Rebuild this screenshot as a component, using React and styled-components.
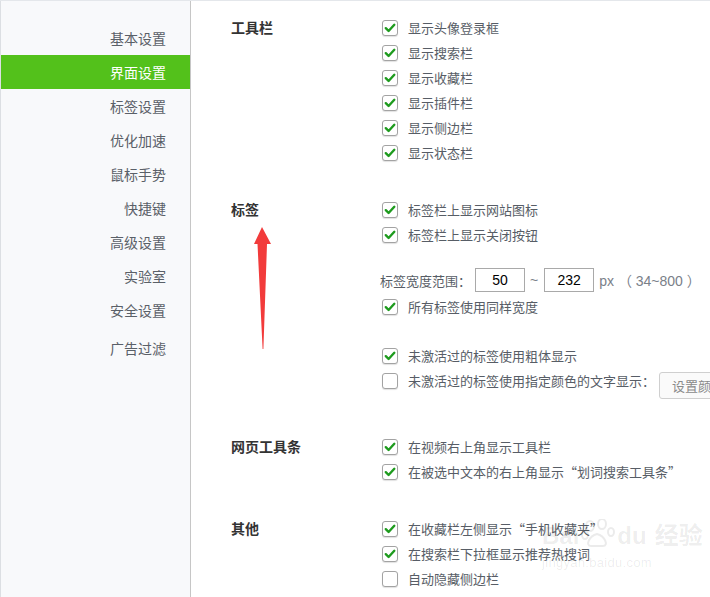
import React from 'react';
import styled, { createGlobalStyle } from 'styled-components';

const Global = createGlobalStyle`
  html, body { margin: 0; padding: 0; background: #fff; }
  body { font-family: "Noto Sans CJK SC", "Liberation Sans", sans-serif; }
`;

const Page = styled.div`
  position: relative;
  display: flex;
  width: 710px;
  height: 597px;
  overflow: hidden;
  border-top: 1px solid #e4e7eb;
  box-sizing: border-box;
`;

const Sidebar = styled.nav`
  flex: none;
  width: 191px;
  box-sizing: border-box;
  background: #f8f9fb;
  border-left: 1px solid #dcdfe3;
  border-right: 1px solid #c6c6c6;
  padding-top: 20px;
  display: flex;
  flex-direction: column;
`;

const NavItem = styled.div`
  height: 34px;
  line-height: 34px;
  text-align: right;
  padding-right: 24px;
  font-size: 14px;
  color: ${p => (p.$active ? '#ffffff' : '#5a6068')};
  background: ${p => (p.$active ? '#53c11b' : 'transparent')};
  margin-top: ${p => p.$gap || 0}px;
`;

const Content = styled.main`
  flex: 1;
  min-width: 0;
  padding: 14px 0 0 40px;
  overflow: hidden;
`;

const Section = styled.section`
  display: grid;
  grid-template-columns: 151px auto;
  margin-bottom: ${p => p.$after || 32}px;
`;

const Title = styled.h3`
  margin: 0;
  height: 25px;
  line-height: 25px;
  font-size: 14px;
  font-weight: bold;
  color: #333;
`;

const Options = styled.div`
  display: flex;
  flex-direction: column;
`;

const Row = styled.div`
  display: flex;
  align-items: center;
  gap: 10px;
  height: 25px;
  font-size: 13px;
  color: #575d66;
  white-space: nowrap;
`;

const Box = styled.span`
  flex: none;
  width: 16px;
  height: 16px;
  box-sizing: border-box;
  border: 1px solid #a3a3a3;
  border-radius: 3px;
  background: #fff;
  box-shadow: 0 1px 1px rgba(0, 0, 0, 0.12);
  display: flex;
  align-items: center;
  justify-content: center;
`;

const Check = ({ on }) => (
  <Box>
    {on && (
      <svg width="12" height="12" viewBox="0 0 12 12">
        <path d="M1.8 6.2 L4.6 9 L10.3 2.8" fill="none" stroke="#1e9b1e" strokeWidth="2.4" strokeLinecap="round" strokeLinejoin="round" />
      </svg>
    )}
  </Box>
);

const Option = ({ on, children, extra }) => (
  <Row>
    <Check on={on} />
    <span>{children}</span>
    {extra}
  </Row>
);

const WidthRow = styled.div`
  display: flex;
  align-items: center;
  height: 24px;
  margin: 21px 0 2px -2px;
  font-size: 13px;
  color: #575d66;
  white-space: nowrap;
`;

const NumInput = styled.input`
  width: 50px;
  height: 24px;
  box-sizing: border-box;
  border: 1px solid #a9a9a9;
  padding: 0;
  margin: ${p => p.$m || '0'};
  text-align: center;
  font-family: "Liberation Sans", Arial, sans-serif;
  font-size: 14px;
  color: #000;
  background: #fff;
  outline: none;
`;

const Muted = styled.span`
  font-family: "Liberation Sans", "Noto Sans CJK SC", sans-serif;
  font-size: 14px;
  color: #7a8089;
  margin: ${p => p.$m || '0'};
`;

const Spacer = styled.div`
  height: ${p => p.$h}px;
`;

const ColorButton = styled.button`
  flex: none;
  height: 27px;
  margin: 10px 0 0 -6px;
  padding: 0 12px;
  border: 1px solid #cfcfcf;
  border-radius: 3px;
  background: #fafafa;
  color: #8a8a8a;
  font-family: "Noto Sans CJK SC", sans-serif;
  font-size: 13px;
  white-space: nowrap;
`;

const Arrow = styled.svg`
  position: absolute;
  left: 250px;
  top: 222px;
`;

const Watermark = styled.div`
  position: absolute;
  left: 542px;
  top: 518px;
  color: rgba(0, 0, 0, 0.08);
  font-family: "Liberation Sans", "Noto Sans CJK SC", sans-serif;
  pointer-events: none;
  display: flex;
  flex-direction: column;
`;

const WmTop = styled.div`
  display: flex;
  align-items: flex-end;
  gap: 2px;
  font-size: 24px;
  font-weight: bold;
  line-height: 26px;
`;

const WmSub = styled.div`
  font-size: 13px;
  margin-top: 6px;
  letter-spacing: 0.3px;
`;

const nav = ['基本设置', '界面设置', '标签设置', '优化加速', '鼠标手势', '快捷键', '高级设置', '实验室', '安全设置', '广告过滤'];

export default function App() {
  return (
    <>
      <Global />
      <Page>
        <Sidebar>
          {nav.map((n, i) => (
            <NavItem key={n} $active={i === 1} $gap={i === 9 ? 4 : 0}>{n}</NavItem>
          ))}
        </Sidebar>
        <Content>
          <Section>
            <Title>工具栏</Title>
            <Options>
              <Option on>显示头像登录框</Option>
              <Option on>显示搜索栏</Option>
              <Option on>显示收藏栏</Option>
              <Option on>显示插件栏</Option>
              <Option on>显示侧边栏</Option>
              <Option on>显示状态栏</Option>
            </Options>
          </Section>
          <Section $after={41}>
            <Title>标签</Title>
            <Options>
              <Option on>标签栏上显示网站图标</Option>
              <Option on>标签栏上显示关闭按钮</Option>
              <WidthRow>
                <span>标签宽度范围：</span>
                <NumInput readOnly value="50" $m="0 0 0 4px" />
                <Muted $m="0 6px 0 5px">~</Muted>
                <NumInput readOnly value="232" />
                <Muted $m="0 0 0 5px">px （ 34~800 ）</Muted>
              </WidthRow>
              <Option on>所有标签使用同样宽度</Option>
              <Spacer $h={24} />
              <Option on>未激活过的标签使用粗体显示</Option>
              <Option extra={<ColorButton>设置颜色</ColorButton>}>未激活过的标签使用指定颜色的文字显示：</Option>
            </Options>
          </Section>
          <Section>
            <Title>网页工具条</Title>
            <Options>
              <Option on>在视频右上角显示工具栏</Option>
              <Option on>在被选中文本的右上角显示“划词搜索工具条”</Option>
            </Options>
          </Section>
          <Section>
            <Title>其他</Title>
            <Options>
              <Option on>在收藏栏左侧显示“手机收藏夹”</Option>
              <Option on>在搜索栏下拉框显示推荐热搜词</Option>
              <Option>自动隐藏侧边栏</Option>
            </Options>
          </Section>
        </Content>
        <Arrow width="26" height="130" viewBox="0 0 26 130">
          <polygon points="12,4 21,21 17,21 13.4,126 12.6,126 7.5,21 4,21" fill="#f23b3b" />
        </Arrow>
        <Watermark>
          <WmTop>
            <span>Bai</span>
            <svg width="34" height="30" viewBox="0 0 34 30">
              <g fill="none" stroke="rgba(0,0,0,0.08)" strokeWidth="2">
                <ellipse cx="9" cy="7" rx="4" ry="5" />
                <ellipse cx="21" cy="5" rx="4" ry="5" />
                <ellipse cx="30" cy="13" rx="3" ry="4" />
                <ellipse cx="4" cy="16" rx="3" ry="4" />
                <path d="M10 27 C4 27 8 17 16 15 C24 17 28 27 22 27 Z" />
              </g>
            </svg>
            <span>du</span>
            <span style={{ marginLeft: 6 }}>经验</span>
          </WmTop>
          <WmSub>jingyan.baidu.com</WmSub>
        </Watermark>
      </Page>
    </>
  );
}
